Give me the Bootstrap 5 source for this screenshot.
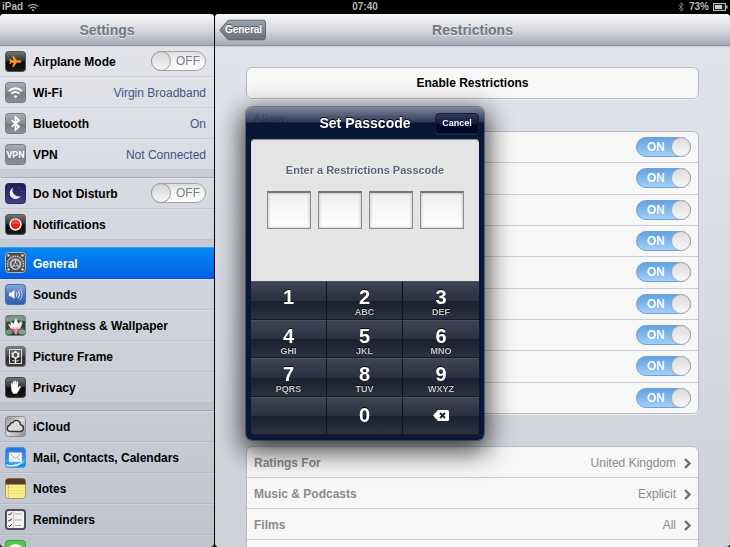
<!DOCTYPE html>
<html lang="en">
<head>
<meta charset="utf-8">
<meta name="viewport" content="width=device-width, initial-scale=1">
<title>Settings – Restrictions</title>
<link href="https://cdn.jsdelivr.net/npm/bootstrap@5.3.0/dist/css/bootstrap.min.css" rel="stylesheet">
<style>
body{font-family:"Liberation Sans",Arial,sans-serif;font-size:12px;line-height:16px;background:#000;color:#000}
.status-bar{height:14px;font-size:10px;line-height:14px;font-weight:700;color:#b8b8b8;display:grid;grid-template-columns:1fr auto 1fr;padding:0 2px}
.pane{border-radius:4px}
.side{width:214px;background:linear-gradient(#e4e6eb,#bfc3ce)}
.main-pane{background:linear-gradient(#e2e5eb,#cfd1d9);margin-left:1px}
.bar{height:32px;flex:none;background:linear-gradient(#f6f6f8,#d9dae1 50%,#a4a8b8);border-bottom:1px solid #8d92a4;box-shadow:0 1px 1px #c8ccd6}
.bar h1{font-size:14px;line-height:20px;font-weight:700;color:#717880;text-shadow:0 1px 0 #eee}
.set-row{height:31px;padding:0 8px 0 5px;border-bottom:1px solid rgba(130,138,152,.22);box-shadow:inset 0 1px 0 rgba(255,255,255,.18);color:#000;text-decoration:none}
.set-row svg{width:21px;height:21px;margin-right:7px;flex:none}
.set-row>span,.set-row>label:not(.switch){padding-top:2px}
.set-row.is-active{height:32px;margin-top:-1px;background:linear-gradient(#0589f3,#0260e4);color:#fff;border-color:#0257d4}
.set-row>.val{font-weight:400;color:#3c5588}
.split{height:8px;background:rgba(165,170,188,.28);border-bottom:1px solid rgba(120,128,145,.4)}
.switch{display:inline-grid;width:55px;height:20px;flex:none}
.switch>*{grid-area:1/1}
.switch input{appearance:none;margin:0;width:55px;height:20px;border-radius:10px;border:1px solid #a3a5a9;background:linear-gradient(#dcdcde,#f3f3f4 40%,#fdfdfd);display:flex}
.switch input::before{content:"";width:20px;height:20px;margin:-1px;border-radius:50%;border:1px solid #9a9ca0;background:linear-gradient(#d5d5d7,#f6f6f6)}
.switch span{z-index:1;align-self:center;font-weight:400;color:#7d7f83;padding-left:25px;line-height:20px}
.switch input:checked{border-color:#6f9fd4;background:linear-gradient(#64a4e0,#7db8ee 50%,#a6d0f5);justify-content:flex-end}
.switch input:checked::before{background:linear-gradient(#dcdcde,#f8f8f8);border-color:#a8abb0}
.switch input:checked+span{color:#fff;font-weight:700;padding-left:11px}
.group{background:#f7f7f7;border:1px solid #b5b8be;border-radius:6px;box-shadow:0 1px 0 #eff0f3}
.group>*{border-bottom:1px solid #c9cbcf}
.group>:last-child{border-bottom:0}
.content{padding:21px 31px 0 31px}
.group .enable{height:30px;background:none;border:0;font-weight:700;font-size:12px}
.allow{margin:12px 7px 4px;font-size:12px;line-height:16px;font-weight:700;color:#4c566c}
.allow-list{height:283px;margin-bottom:32px}
.allow-list>div{flex:1 1 0;padding-right:7px}
.link-row{height:31px;padding:2px 7px 0;color:#8a8a8a;text-decoration:none;font-weight:700}
.link-row .val{font-weight:400}
.link-row svg{width:7px;height:11px;margin-left:8px}
.back{width:47px;height:21px;margin-left:4px;border:0;background:none;padding:0 0 0 2px;font-size:10px;line-height:20px;color:#fff;font-weight:700;text-shadow:0 -1px 0 #555a62}
.overlay{pointer-events:none}
.dialog-box{pointer-events:auto;width:238px;padding:0 5px 5px;border-radius:6px;background:linear-gradient(rgba(118,126,147,.9),rgba(30,44,76,.92) 15px,rgba(2,13,44,.97) 16px,#07183a 34px,#07183a);box-shadow:0 0 0 1px rgba(5,12,30,.35),0 8px 26px 4px rgba(0,0,0,.72)}
.dialog-head{height:32px;display:grid;grid-template-columns:44px 1fr 44px;align-items:center}
.dialog-head h2{font-size:14px;line-height:20px;font-weight:700;color:#fff;text-shadow:0 -1px 0 #000}
.cancel{height:21px;padding:0;border:1px solid #111a38;border-radius:4px;background:linear-gradient(#303b5c,#111b3f 50%,#000826 51%,#000826);font-size:9px;font-weight:700;color:#fff;box-shadow:0 1px 0 #1c2a4c}
.code-area{height:142px;padding:23px 0 0;background:#e5e5e5;border-radius:4px 4px 0 0;box-shadow:inset 0 1px 1px #888}
.code-area p{font-size:11px;line-height:16px;font-weight:700;color:#5a647f;text-shadow:0 1px 0 #fff}
.code-boxes{gap:7px;margin-top:13px}
.code-area input{width:44px;height:38px;border:1px solid #8a8a8a;border-top:2px solid #747474;background:linear-gradient(#efefef,#fff);text-align:center;padding:0;box-shadow:inset 0 0 3px #aaa}
.keys{display:grid;grid-template-columns:repeat(3,1fr);height:154px;grid-template-rows:repeat(4,1fr);overflow:hidden;border-radius:0 0 4px 4px}
.keys button{border:0;border-top:1px solid #4c5260;border-right:1px solid #10141f;border-bottom:1px solid #171b28;background:linear-gradient(#3e4453,#2a3040 50%,#1a2030 51%,#2b313f);color:#fff;padding:5px 0 0;font-size:20px;line-height:20px;font-weight:700;text-shadow:0 -1px 0 #000;display:flex;flex-direction:column;align-items:center;justify-content:flex-start}
.keys button:nth-child(3n){border-right:0}
.keys .zero{padding-top:7px}
.keys small{font-size:9px;line-height:10px;color:#c4c6cc}
</style>
<script src="https://cdn.jsdelivr.net/npm/bootstrap@5.3.0/dist/js/bootstrap.bundle.min.js"></script>
</head>
<body class="vh-100 d-flex flex-column overflow-hidden">
<svg width="0" height="0" class="position-absolute" aria-hidden="true">
<defs>
<linearGradient id="gGray" x2="0" y2="1"><stop stop-color="#adb1b7"/><stop offset=".5" stop-color="#858a92"/><stop offset=".52" stop-color="#73787f"/><stop offset="1" stop-color="#8e9399"/></linearGradient>
<linearGradient id="gBlack" x2="0" y2="1"><stop stop-color="#777"/><stop offset=".48" stop-color="#303030"/><stop offset=".52" stop-color="#080808"/><stop offset="1" stop-color="#1b1b1b"/></linearGradient>
<linearGradient id="gNavy" x2="0" y2="1"><stop stop-color="#1b1c50"/><stop offset="1" stop-color="#41408b"/></linearGradient>
<linearGradient id="gBlue" x2="0" y2="1"><stop stop-color="#8fa9da"/><stop offset=".5" stop-color="#4d73bb"/><stop offset="1" stop-color="#345fae"/></linearGradient>
<linearGradient id="gMail" x2="0" y2="1"><stop stop-color="#2a6fdf"/><stop offset="1" stop-color="#39b4f8"/></linearGradient>
<linearGradient id="gSilver" x2="1" y2="1"><stop stop-color="#8f8f8f"/><stop offset=".5" stop-color="#dedede"/><stop offset="1" stop-color="#888"/></linearGradient>
<linearGradient id="gBack" x2="0" y2="1"><stop stop-color="#a1a6ae"/><stop offset=".5" stop-color="#7f868f"/><stop offset="1" stop-color="#69717b"/></linearGradient>
<symbol id="chev" viewBox="0 0 7 11"><path d="M1 1l4.500 4.500L1 10" fill="none" stroke="#707070" stroke-width="2.400"/></symbol>
</defs>
</svg>

<header class="status-bar flex-shrink-0">
  <div class="d-flex align-items-center"><span>iPad</span>
    <svg class="ms-1" width="12" height="9" viewBox="0 0 12 9" fill="none" stroke="#aaa" stroke-width="1.300"><path d="M1 3.600Q6-.8 11 3.600M2.900 5.500Q6 2.900 9.100 5.500"/><path d="M6 8.500L4.300 6.900Q6 5.600 7.700 6.900Z" fill="#aaa" stroke="none"/></svg></div>
  <div>07:40</div>
  <div class="d-flex align-items-center justify-content-end"><svg class="me-1" width="8" height="10" viewBox="0 0 8 10" fill="none" stroke="#777" stroke-width="1"><path d="M1.500 2.700L6.300 7.300 4 9.400V.6L6.300 2.700 1.500 7.300"/></svg><span>73%</span>
    <svg class="ms-1" width="15" height="8" viewBox="0 0 15 8"><rect x=".5" y=".5" width="12" height="7" fill="#222" stroke="#bbb"/><rect x="2" y="2" width="7" height="4" fill="#ccc"/><path d="M13 2.500h1.500v3H13z" fill="#bbb"/></svg></div>
</header>

<div class="d-flex flex-grow-1 overflow-hidden">
<aside class="side pane flex-shrink-0 overflow-hidden">
  <div class="bar d-flex align-items-center justify-content-center"><h1 class="m-0">Settings</h1></div>
  <nav class="fw-bold">
    <div class="set-row d-flex align-items-center">
      <svg viewBox="0 0 21 21"><rect x=".5" y=".5" width="20" height="20" rx="3" fill="url(#gBlack)" stroke="#555"/><path d="M16.500 10.500q-.5-1.200-2-1.200h-2.700L8.500 4.700H7.200l1.400 4.600H6.500L5.200 7.700H4.300l.7 2.800-.7 2.800h.9l1.300-1.600h2.100l-1.400 4.600h1.300l3.300-4.600h2.700q1.500 0 2-1.200z" fill="#f7941d"/></svg>
      <label class="me-auto" for="air">Airplane Mode</label><label class="switch"><input type="checkbox" id="air"><span>OFF</span></label></div>
    <a href="#" class="set-row d-flex align-items-center">
      <svg viewBox="0 0 21 21"><rect x=".5" y=".5" width="20" height="20" rx="3" fill="url(#gGray)" stroke="#777c82"/><g fill="none" stroke="#fff" stroke-width="1.800"><path d="M3.900 9Q10.500 3.400 17.100 9M6.400 11.700q4.100-3.300 8.200 0"/></g><path d="M10.500 16.200l-2-2.200q2-1.500 4 0z" fill="#fff"/></svg>
      <span class="me-auto">Wi-Fi</span><span class="val">Virgin Broadband</span></a>
    <a href="#" class="set-row d-flex align-items-center">
      <svg viewBox="0 0 21 21"><rect x=".5" y=".5" width="20" height="20" rx="3" fill="url(#gGray)" stroke="#777c82"/><path d="M6.700 7.200l7.300 6.600-3.500 3.100V4.100L14 7.200l-7.300 6.600" fill="none" stroke="#fff" stroke-width="1.700"/></svg>
      <span class="me-auto">Bluetooth</span><span class="val">On</span></a>
    <a href="#" class="set-row d-flex align-items-center">
      <svg viewBox="0 0 21 21"><rect x=".5" y=".5" width="20" height="20" rx="3" fill="url(#gGray)" stroke="#777c82"/><text x="10.500" y="14" text-anchor="middle" font-family="Roboto, sans-serif" font-size="9" font-weight="700" fill="#fff">VPN</text></svg>
      <span class="me-auto">VPN</span><span class="val">Not Connected</span></a>
    <div class="split"></div>
    <div class="set-row d-flex align-items-center">
      <svg viewBox="0 0 21 21"><rect x=".5" y=".5" width="20" height="20" rx="3" fill="url(#gNavy)" stroke="#292961"/><path d="M8.300 4.500a6 6 0 1 0 7.600 8.400A6 6 0 0 1 8.300 4.500z" fill="#f2f2f8"/><g fill="#8f92cc"><circle cx="14" cy="4.500" r=".5"/><circle cx="17" cy="8" r=".5"/><circle cx="4" cy="4" r=".5"/></g></svg>
      <label class="me-auto" for="dnd">Do Not Disturb</label><label class="switch"><input type="checkbox" id="dnd"><span>OFF</span></label></div>
    <a href="#" class="set-row d-flex align-items-center">
      <svg viewBox="0 0 21 21"><rect x=".5" y=".5" width="20" height="20" rx="3" fill="url(#gBlack)" stroke="#555"/><circle cx="10.500" cy="10.500" r="5.500" fill="#e02624" stroke="#f7efef" stroke-width="1.500"/><path d="M6 10a4.500 4.500 0 0 1 9 0z" fill="#ea4643"/></svg>
      <span>Notifications</span></a>
    <div class="split"></div>
    <a href="#" class="set-row is-active d-flex align-items-center" aria-current="page">
      <svg viewBox="0 0 21 21"><rect x=".5" y=".5" width="20" height="20" rx="3" fill="#4a4a4a" stroke="#b5b5b5"/><path d="M3 15a8 8 0 1 1 15 0" fill="none" stroke="#c9c9c9" stroke-width="1.600" stroke-dasharray="1.600 .8"/><path d="M4.500 14a6.300 6.300 0 1 1 12 0z" fill="#8b8b8b"/><circle cx="10.500" cy="12.500" r="4.800" fill="#555" stroke="#d8d8d8" stroke-width="1.300"/><path d="M10.500 12.500V8M10.500 12.500l4 2.500M10.500 12.500l-4 2.500" stroke="#d0d0d0" stroke-width="1.400"/><circle cx="10.500" cy="12.500" r="1.500" fill="#444" stroke="#ccc"/><g fill="#ddd"><circle cx="3.500" cy="3.500" r="1.200"/><circle cx="17.500" cy="3.500" r="1.200"/><circle cx="3.500" cy="17.500" r="1.200"/><circle cx="17.500" cy="17.500" r="1.200"/></g></svg>
      <span>General</span></a>
    <a href="#" class="set-row d-flex align-items-center">
      <svg viewBox="0 0 21 21"><rect x=".5" y=".5" width="20" height="20" rx="3" fill="url(#gBlue)" stroke="#456bb1"/><path d="M4 8.800h2L9.500 6v9L6 12.200H4z" fill="#fff"/><g fill="none" stroke="#fff"><path d="M11.300 8.300q1.500 2.200 0 4.400M13.300 6.700q2.700 3.800 0 7.600"/><path d="M15.200 5.200q3.800 5.300 0 10.600" opacity=".65"/></g></svg>
      <span>Sounds</span></a>
    <a href="#" class="set-row d-flex align-items-center">
      <svg viewBox="0 0 21 21"><rect x=".5" y=".5" width="20" height="20" rx="3" fill="#2c4a3c" stroke="#6f8078"/><path d="M1 2q5-1.500 19-.8V6Q12 4 1 7z" fill="#81978f"/><ellipse cx="4" cy="17" rx="3.500" ry="2.500" fill="#6c9a74"/><ellipse cx="17" cy="17" rx="3.500" ry="2.500" fill="#83a887"/><path d="M3 9l5 1 3-7 3 7 4-3-3 7H6z" fill="#f6dde2"/><path d="M5 6l4 3 1.500-5L13 9l4-4-2 7H7z" fill="#fff4f2"/><path d="M3 13l7 1 10-1-6 2-3 5-3-4z" fill="#d54e72"/><path d="M8 11l2 4 3-4-1 8h-2z" fill="#ef94a7"/></svg>
      <span>Brightness &amp; Wallpaper</span></a>
    <a href="#" class="set-row d-flex align-items-center">
      <svg viewBox="0 0 21 21"><rect x=".5" y=".5" width="20" height="20" rx="3" fill="url(#gBlack)" stroke="#777"/><rect x="1" y="1" width="19" height="19" rx="2.500" fill="#888" opacity=".3"/><rect x="4.500" y="3.500" width="12" height="14" fill="none" stroke="#ddd"/><g fill="#eee"><circle cx="10.500" cy="6.300" r="1.500"/><circle cx="8" cy="7.700" r="1.500"/><circle cx="13" cy="7.700" r="1.500"/><circle cx="8" cy="10.300" r="1.500"/><circle cx="13" cy="10.300" r="1.500"/><circle cx="10.500" cy="11.700" r="1.500"/></g><circle cx="10.500" cy="9" r="1.900" fill="#4b4b4b"/><path d="M10.500 12v5M7.500 14.500q2 0 3 1.500 1-1.500 3-1.500" fill="none" stroke="#eee"/></svg>
      <span>Picture Frame</span></a>
    <a href="#" class="set-row d-flex align-items-center">
      <svg viewBox="0 0 21 21"><rect x=".5" y=".5" width="20" height="20" rx="3" fill="url(#gBlack)" stroke="#444"/><path d="M6 6.200q.9-.7 1.300.4l.4 2V4.900q.8-1.100 1.600 0V8l.3-4q.8-1.100 1.600 0v4l.5-3.300q.9-.8 1.500.2l-.3 6 1.800-1.800q1.300-.4 1.200.7l-2.700 5-1.600 1.900H8.300L6.500 14z" fill="#fff"/></svg>
      <span>Privacy</span></a>
    <div class="split"></div>
    <a href="#" class="set-row d-flex align-items-center">
      <svg viewBox="0 0 21 21"><rect x=".5" y=".5" width="20" height="20" rx="3" fill="url(#gSilver)" stroke="#8c8c8c"/><path d="M5 15.500a3.200 3.200 0 0 1-.2-6.300 2.500 2.500 0 0 1 3-2.500 4 4 0 0 1 7.600 2 3.500 3.500 0 0 1 .6 6.800z" fill="#dcdcdc" stroke="#333" stroke-width="1.400"/></svg>
      <span>iCloud</span></a>
    <a href="#" class="set-row d-flex align-items-center">
      <svg viewBox="0 0 21 21"><rect x=".5" y=".5" width="20" height="20" rx="3" fill="url(#gMail)" stroke="#4c93d8"/><path d="M1 15q8 6 19 1v3.500H1z" fill="#1586e0"/><path d="M1 17q9 3 19-4-5 6-11 6.500H2z" fill="#d9f3ff"/><rect x="4" y="5.500" width="13" height="9.500" rx=".5" fill="#f4f5f6" stroke="#a9b5c2" stroke-width=".5"/><path d="M5.500 7l5 4.500 5-4.500M6 13.500l2.600-3M15 13.500l-2.600-3" fill="none" stroke="#8c98a6" stroke-width=".8"/></svg>
      <span>Mail, Contacts, Calendars</span></a>
    <a href="#" class="set-row d-flex align-items-center">
      <svg viewBox="0 0 21 21"><rect x=".5" y=".5" width="20" height="20" rx="3" fill="#f7ed85" stroke="#a79d5d"/><path d="M.5 6.500v-3a3 3 0 0 1 3-3h14a3 3 0 0 1 3 3v3z" fill="#56382e"/><path d="M1 9.500h19M1 12.500h19M1 15.500h19" stroke="#e4d97a" stroke-width=".6"/><path d="M3.500 7v13" stroke="#cda267" stroke-width=".6"/></svg>
      <span>Notes</span></a>
    <a href="#" class="set-row d-flex align-items-center">
      <svg viewBox="0 0 21 21"><rect x="1" y="1" width="19" height="19" rx="2.500" fill="#f3f3f1" stroke="#4d4f53" stroke-width="2"/><path d="M8.700 2v17" stroke="#e6a1a1" stroke-width=".7"/><path d="M3.500 5l1 1.200 2.300-2.700M3.500 11l1 1.200 2.300-2.700M3.500 16.500l1 1.200L6.800 15" fill="none" stroke="#222"/><path d="M10 5h7M10 11h7M10 16.500h6" stroke="#aaa"/></svg>
      <span>Reminders</span></a>
    <a href="#" class="set-row d-flex align-items-center" aria-label="Messages">
      <svg viewBox="0 0 21 21"><rect x=".5" y=".5" width="20" height="20" rx="3" fill="#54c84b" stroke="#2f9d33"/><ellipse cx="10.500" cy="9.500" rx="7" ry="5.500" fill="#e9f9e6"/></svg></a>
  </nav>
</aside>

<main class="main-pane pane flex-grow-1 overflow-hidden">
  <div class="bar position-relative d-flex align-items-center justify-content-center">
    <div class="position-absolute start-0 top-50 translate-middle-y d-flex"><button class="back position-relative" type="button"><svg class="position-absolute top-0 start-0 w-100 h-100" viewBox="0 0 47 21"><path d="M.7 10.500L8 2q1-1.500 3-1.500h32.500a3 3 0 0 1 3 3v14a3 3 0 0 1-3 3H11q-2 0-3-1.500z" fill="url(#gBack)" stroke="#60666f"/></svg><span class="position-relative">General</span></button></div>
    <h1 class="m-0">Restrictions</h1></div>
  <div class="content">
    <div class="group"><button class="enable w-100 d-block" type="button">Enable Restrictions</button></div>
    <h2 class="allow">Allow:</h2>
    <div class="group allow-list d-flex flex-column">
      <div class="d-flex align-items-center justify-content-end"><label class="switch"><input type="checkbox" checked><span>ON</span></label></div>
      <div class="d-flex align-items-center justify-content-end"><label class="switch"><input type="checkbox" checked><span>ON</span></label></div>
      <div class="d-flex align-items-center justify-content-end"><label class="switch"><input type="checkbox" checked><span>ON</span></label></div>
      <div class="d-flex align-items-center justify-content-end"><label class="switch"><input type="checkbox" checked><span>ON</span></label></div>
      <div class="d-flex align-items-center justify-content-end"><label class="switch"><input type="checkbox" checked><span>ON</span></label></div>
      <div class="d-flex align-items-center justify-content-end"><label class="switch"><input type="checkbox" checked><span>ON</span></label></div>
      <div class="d-flex align-items-center justify-content-end"><label class="switch"><input type="checkbox" checked><span>ON</span></label></div>
      <div class="d-flex align-items-center justify-content-end"><label class="switch"><input type="checkbox" checked><span>ON</span></label></div>
      <div class="d-flex align-items-center justify-content-end"><label class="switch"><input type="checkbox" checked><span>ON</span></label></div>
    </div>
    <div class="group">
      <a href="#" class="link-row d-flex align-items-center"><span class="me-auto">Ratings For</span><span class="val">United Kingdom</span><svg><use href="#chev"/></svg></a>
      <a href="#" class="link-row d-flex align-items-center"><span class="me-auto">Music &amp; Podcasts</span><span class="val">Explicit</span><svg><use href="#chev"/></svg></a>
      <a href="#" class="link-row d-flex align-items-center"><span class="me-auto">Films</span><span class="val">All</span><svg><use href="#chev"/></svg></a>
      <div class="link-row"></div>
    </div>
  </div>
</main>
</div>

<div class="overlay position-fixed top-0 start-0 w-100 h-100 d-flex align-items-center justify-content-center">
  <section class="dialog-box" role="dialog" aria-labelledby="dlg-title">
    <div class="dialog-head"><span></span><h2 class="m-0 text-center" id="dlg-title">Set Passcode</h2><button class="cancel" type="button">Cancel</button></div>
    <div class="code-area text-center">
      <p class="mb-0" id="prompt">Enter a Restrictions Passcode</p>
      <div class="code-boxes d-flex justify-content-center" role="group" aria-labelledby="prompt">
        <input type="password" maxlength="1" aria-label="Digit 1"><input type="password" maxlength="1" aria-label="Digit 2"><input type="password" maxlength="1" aria-label="Digit 3"><input type="password" maxlength="1" aria-label="Digit 4">
      </div>
    </div>
    <div class="keys">
      <button type="button">1</button><button type="button">2<small>ABC</small></button><button type="button">3<small>DEF</small></button>
      <button type="button">4<small>GHI</small></button><button type="button">5<small>JKL</small></button><button type="button">6<small>MNO</small></button>
      <button type="button">7<small>PQRS</small></button><button type="button">8<small>TUV</small></button><button type="button">9<small>WXYZ</small></button>
      <button type="button" disabled></button><button type="button" class="zero">0</button>
      <button type="button" class="justify-content-center pt-0" aria-label="Delete"><svg width="16" height="11" viewBox="0 0 16 11"><path d="M0 5.500L5 0h9.500A1.500 1.500 0 0 1 16 1.500v8a1.500 1.500 0 0 1-1.500 1.500H5z" fill="#fff"/><path d="M7 3l5 5M12 3L7 8" stroke="#1c2233" stroke-width="1.800"/></svg></button>
    </div>
  </section>
</div>
</body>
</html>
